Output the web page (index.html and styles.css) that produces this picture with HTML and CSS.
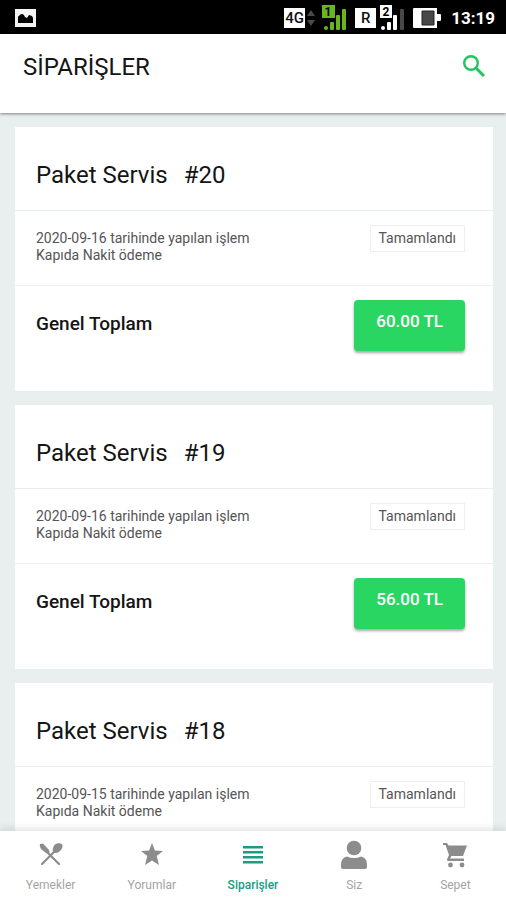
FILE: index.html
```html
<!DOCTYPE html>
<html lang="tr">
<head>
<meta charset="utf-8">
<meta name="viewport" content="width=device-width, initial-scale=1">
<title>Siparişler</title>
<link rel="stylesheet" href="styles.css">
</head>
<body>
<div class="status-bar">
  <svg class="notice" width="21" height="18" viewBox="0 0 21 18" aria-hidden="true"><path fill="#f4f4f4" d="M0 0h21v18H0z"/><path d="M3 14V8q0-1 1-1 1-2 3-2t3 3l2 1 2-3 3 1 1 2v5z"/></svg>
  <div class="indicators">
    <span class="chip">4G</span>
    <svg class="traffic" width="8" height="18" viewBox="0 0 8 18" fill="#4a4a4a" aria-hidden="true"><path d="M4 1l4 6H0zM4 17l4-6H0z"/></svg>
    <svg class="sim" width="25" height="26" viewBox="0 0 25 26" fill="#69b51c" aria-hidden="true"><path d="M0 0h13v13H0z"/><text x="6" y="11" fill="#000">1</text><circle cx="4" cy="23" r="2"/><rect x="8" y="17" width="4" height="8" rx="1"/><rect x="14" y="10" width="4" height="15" rx="1"/><rect x="20" y="4" width="4" height="21" rx="1"/></svg>
    <span class="chip">R</span>
    <svg class="sim second" width="25" height="26" viewBox="0 0 25 26" fill="#fff" aria-hidden="true"><path d="M0 0h12v13H0z"/><text x="6" y="11" fill="#000">2</text><circle cx="3" cy="23" r="2"/><rect x="7" y="17" width="4" height="8" rx="1"/><rect x="13" y="10" width="4" height="15" rx="1"/><rect x="20" y="4" width="4" height="21" rx="1" fill="#484848"/></svg>
    <svg width="29" height="20" viewBox="0 0 29 20" aria-hidden="true"><path fill="#fff" d="M1 0h23v6h3q1 0 1 1v5q0 1-1 1h-3v7H1q-1 0-1-1V1q0-1 1-1z"/><path fill="#484848" stroke="#222" d="M9 3h12v14H9z"/></svg>
    <time>13:19</time>
  </div>
</div>
<header class="app-header">
  <h1>SİPARİŞLER</h1>
  <button class="search" type="button" aria-label="Ara"><svg width="22" height="22" viewBox="0 0 22 22" fill="none" stroke="#1fc55f" aria-hidden="true"><circle cx="8" cy="8" r="6.8" stroke-width="2.4"/><path stroke-width="3" d="M13 13l8 8"/></svg></button>
</header>
<main class="orders">
  <article class="order">
    <h2><span>Paket Servis</span><span>#20</span></h2>
    <div class="details"><p>2020-09-16 tarihinde yapılan işlem<br>Kapıda Nakit ödeme</p><span class="state">Tamamlandı</span></div>
    <div class="total"><strong>Genel Toplam</strong><button class="amount" type="button">60.00 TL</button></div>
  </article>
  <article class="order">
    <h2><span>Paket Servis</span><span>#19</span></h2>
    <div class="details"><p>2020-09-16 tarihinde yapılan işlem<br>Kapıda Nakit ödeme</p><span class="state">Tamamlandı</span></div>
    <div class="total"><strong>Genel Toplam</strong><button class="amount" type="button">56.00 TL</button></div>
  </article>
  <article class="order">
    <h2><span>Paket Servis</span><span>#18</span></h2>
    <div class="details"><p>2020-09-15 tarihinde yapılan işlem<br>Kapıda Nakit ödeme</p><span class="state">Tamamlandı</span></div>
  </article>
</main>
<nav class="tabs">
  <a href="#yemekler"><svg width="24" height="30" viewBox="0 0 24 30" aria-hidden="true"><path d="M1 4l3-.5 6 6.500q1 2 0 4L7 13 2 9Q0 6 1 4z"/><path d="M14 8q1-4 5-4.700 4-.5 4.500 2T21 11q-3 3-6 1.500-2-1-1-4.500z"/><path fill="none" stroke="currentColor" stroke-width="2.200" stroke-linecap="round" d="M8 12l12 12M15 12L3 24"/></svg><span>Yemekler</span></a>
  <a href="#yorumlar"><svg width="24" height="30" viewBox="0 0 24 30" aria-hidden="true"><path d="M12 3l2.900 7.600 8.100.4-6.300 5.100L19 25l-7-4.500L5 25l2.300-8.900L1 11l8.100-.4z"/></svg><span>Yorumlar</span></a>
  <a class="active" href="#siparisler" aria-current="page"><svg width="24" height="30" viewBox="0 0 24 30" aria-hidden="true"><path d="M2 6h20v2.500H2zM2 11h20v2.500H2zM2 16h20v2.500H2zM2 21h20v2.500H2z"/></svg><span>Siparişler</span></a>
  <a href="#siz"><svg width="26" height="30" viewBox="0 0 26 30" aria-hidden="true"><circle cx="13" cy="8" r="7.300"/><path d="M0 27v-3q0-6 6-7.500 3 1.500 7 1.500t7-1.500q6 1.500 6 7.500v3q0 2-2 2H2q-2 0-2-2z"/></svg><span>Siz</span></a>
  <a href="#sepet"><svg width="24" height="30" viewBox="0 0 24 30" aria-hidden="true"><path d="M0 3h4l1.500 2.500H24L20 16H8.500L7 18.500h14V21H5.500Q4 21 4 19.500q0-.5 2-4.500L2.500 5H0z"/><circle cx="7.500" cy="25" r="2.400"/><circle cx="19" cy="25" r="2.400"/></svg><span>Sepet</span></a>
</nav>
</body>
</html>
```
FILE: styles.css
```css
* { box-sizing: border-box; }

body {
  margin: 0;
  height: 100vh;
  display: flex;
  flex-direction: column;
  overflow: hidden;
  background: #e9eeee;
  color: #151515;
  font-family: Roboto, "Liberation Sans", sans-serif;
}

h1, h2, p { margin: 0; }
button { border: 0; font: inherit; cursor: pointer; }
svg { display: block; flex: none; }

.status-bar {
  display: flex;
  align-items: center;
  justify-content: space-between;
  height: 34px;
  padding: 2px 11px 0 15px;
  background: #000;
  color: #fff;
}
.indicators { display: flex; align-items: center; gap: 8px; }
.chip {
  width: 21px;
  background: #fff;
  color: #111;
  font-size: 15px;
  font-weight: 500;
  line-height: 20px;
  text-align: center;
}
.traffic { margin: 0 -1px 0 -6px; }
.second { margin-left: -4px; }
.sim { overflow: visible; }
.sim text { font-size: 12px; font-weight: 700; text-anchor: middle; }
.status-bar time { margin-left: 1px; font-size: 17px; font-weight: 700; line-height: 20px; }

.app-header {
  z-index: 1;
  display: flex;
  align-items: flex-start;
  justify-content: space-between;
  height: 79px;
  padding: 19px 21px 0 23px;
  background: #fff;
  box-shadow: 0 1px 3px rgba(0, 0, 0, .45);
}
.app-header h1 { font-size: 24px; font-weight: 400; line-height: 28px; }
.search { padding: 2px 0; background: none; }

.orders {
  flex: 1;
  min-height: 0;
  display: flex;
  flex-direction: column;
  gap: 14px;
  padding: 14px 13px 0 15px;
  overflow: hidden;
}
.order { flex: none; background: #fff; }
.order h2 {
  display: flex;
  gap: 16px;
  padding: 32px 21px 19px;
  border-bottom: 1px solid #e9eeee;
  font-size: 24px;
  font-weight: 400;
  line-height: 32px;
}
.details {
  display: flex;
  align-items: flex-start;
  justify-content: space-between;
  padding: 14px 28px 21px 21px;
  border-bottom: 1px solid #eef0f0;
  color: #555;
  font-size: 14px;
  line-height: 17px;
}
.details p { padding-top: 5px; }
.state { padding: 4px 8px; border: 1px solid #eee; }
.total {
  display: flex;
  align-items: flex-start;
  justify-content: space-between;
  padding: 14px 28px 40px 21px;
}
.total strong { padding-top: 12px; font-size: 19px; font-weight: 500; line-height: 24px; }
.amount {
  padding: 11px 22px 20px;
  border-radius: 4px;
  background: #2ad662;
  color: #fff;
  font-size: 17px;
  font-weight: 500;
  line-height: 20px;
  box-shadow: 0 2px 3px rgba(0, 0, 0, .35);
}

.tabs {
  z-index: 1;
  display: grid;
  grid-template-columns: repeat(5, 1fr);
  height: 69px;
  padding-top: 9px;
  background: #fff;
  box-shadow: 0 -2px 8px rgba(0, 0, 0, .12);
}
.tabs a {
  display: flex;
  flex-direction: column;
  align-items: center;
  gap: 7px;
  color: #8c8c8c;
  font-size: 12px;
  line-height: 16px;
  text-decoration: none;
}
.tabs svg { fill: currentColor; }
.tabs span { color: #a4a4a4; }
.tabs .active, .tabs .active span { color: #189d82; }
.tabs .active span { font-weight: 500; }
```
